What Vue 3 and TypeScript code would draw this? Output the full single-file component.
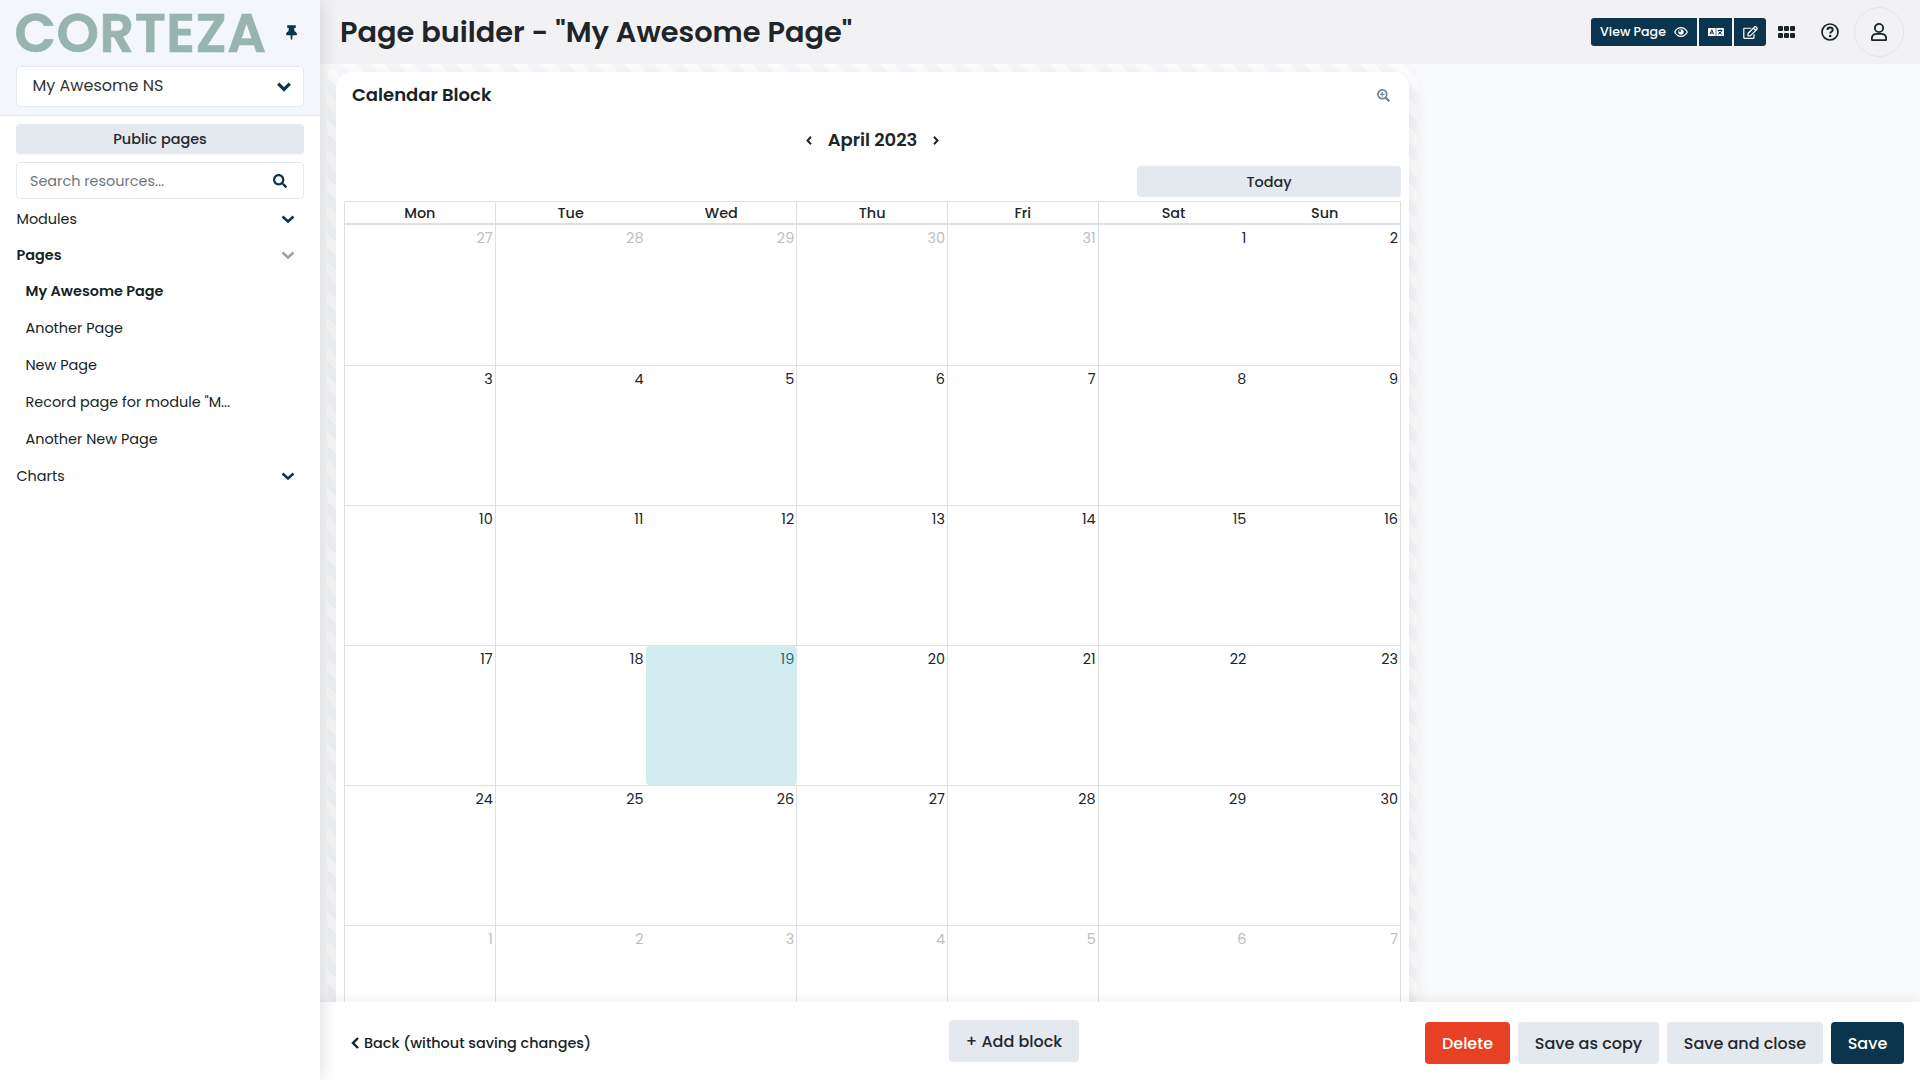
<script setup lang="ts">
interface NavItem { label: string; kind: string; chevron?: string }

const nav: NavItem[] = [
  { label: 'Modules', kind: 'root', chevron: 'dark' },
  { label: 'Pages', kind: 'root bold', chevron: 'grey' },
  { label: 'My Awesome Page', kind: 'child bold' },
  { label: 'Another Page', kind: 'child' },
  { label: 'New Page', kind: 'child' },
  { label: 'Record page for module "M...', kind: 'child' },
  { label: 'Another New Page', kind: 'child' },
  { label: 'Charts', kind: 'root', chevron: 'dark' },
]

const weekdays = ['Mon', 'Tue', 'Wed', 'Thu', 'Fri', 'Sat', 'Sun']

interface Day { n: number; muted: boolean; today: boolean }
const start = new Date(2023, 2, 27)
const weeks: Day[][] = Array.from({ length: 6 }, (_, w) =>
  Array.from({ length: 7 }, (_, d) => {
    const date = new Date(start.getFullYear(), start.getMonth(), start.getDate() + w * 7 + d)
    const april = date.getMonth() === 3
    return { n: date.getDate(), muted: !april, today: april && date.getDate() === 19 }
  }),
)
</script>

<template>
  <div class="app">
    <aside class="sidebar">
      <div class="brand">
        <div class="brand-row">
          <div class="logo">CORTEZA</div>
          <svg class="pin" width="11" height="15" viewBox="0 0 384 512"><path fill="currentColor" d="M298 214 285 96h35c13 0 24-11 24-24V24c0-13-11-24-24-24H64C51 0 40 11 40 24v48c0 13 11 24 24 24h35L86 214C37 237 0 277 0 328c0 13 11 24 24 24h136v104l24 52q8 12 16 0l24-52V352h136c13 0 24-11 24-24 0-52-38-91-86-114z" /></svg>
        </div>
        <div class="select">
          <span>My Awesome NS</span>
          <svg width="14" height="10" viewBox="0 0 14 10"><path d="M1.200 1.700 7 7.500 12.800 1.700" fill="none" stroke="currentColor" stroke-width="3.200" /></svg>
        </div>
      </div>
      <div class="side-body">
        <button class="btn light public">Public pages</button>
        <div class="search">
          <span>Search resources...</span>
          <svg width="14" height="14" viewBox="0 0 512 512"><path fill="currentColor" d="M505 442.700 405.300 343c-4.500-4.500-10.600-7-17-7H372c27.600-35.300 44-79.700 44-128C416 93.100 322.900 0 208 0S0 93.100 0 208s93.100 208 208 208c48.300 0 92.700-16.400 128-44v16.300c0 6.400 2.500 12.500 7 17l99.700 99.700c9.400 9.400 24.600 9.400 33.900 0l28.300-28.300c9.400-9.400 9.400-24.600.1-34zM208 336c-70.700 0-128-57.200-128-128 0-70.700 57.200-128 128-128 70.700 0 128 57.200 128 128 0 70.700-57.200 128-128 128z" /></svg>
        </div>
        <nav>
          <div v-for="item in nav" :key="item.label" class="nav-item" :class="item.kind">
            <span>{{ item.label }}</span>
            <svg v-if="item.chevron" class="chev" :class="item.chevron" width="14" height="10" viewBox="0 0 14 10"><path d="M1.500 2.500 7 7.500 12.500 2.500" fill="none" stroke="currentColor" stroke-width="2.500" /></svg>
          </div>
        </nav>
      </div>
    </aside>

    <main class="main">
      <header class="topbar">
        <h1 class="title">Page builder - "My Awesome Page"</h1>
        <div class="tools">
          <div class="group">
            <button class="navy view">
              <span>View Page</span>
              <svg width="14" height="12" viewBox="0 0 14 12"><path d="M.7 6C3.500.2 10.500.2 13.300 6 10.500 11.800 3.500 11.800.7 6z" fill="none" stroke="#fff" stroke-width="1.200" /><circle cx="7" cy="6" r="2.700" fill="#fff" /><circle cx="6" cy="5" r="1" fill="#0b344e" /></svg>
            </button>
            <button class="navy lang">
              <svg width="16" height="8" viewBox="0 0 16 8"><rect x="8.300" width="7.700" height="8" rx=".6" fill="#fff" /><rect width="7.700" height="8" rx=".6" fill="#fff" /><path d="M2 6.300 3.800 1.800 5.600 6.300M2.700 5h2.200M9.800 2.500h4.600M12.100 1.300v1.200M13.600 2.600C13 4.500 11.500 5.700 10 6.400M10.800 3.700c.8 1.300 1.900 2.100 3.200 2.700" fill="none" stroke="#0b344e" stroke-width="1" /></svg>
            </button>
            <button class="navy edit">
              <svg width="15" height="13" viewBox="0 0 576 512"><path fill="#fff" d="m402.300 344.900 32-32c5-5 13.700-1.500 13.700 5.700V464c0 26.500-21.500 48-48 48H48c-26.500 0-48-21.500-48-48V112c0-26.500 21.500-48 48-48h273.500c7.100 0 10.700 8.600 5.700 13.700l-32 32c-1.500 1.500-3.500 2.300-5.700 2.300H48v352h352V350.500c0-2.100.8-4.100 2.300-5.600zm156.600-201.800L296.300 405.700l-90.400 10c-26.200 2.900-48.500-19.200-45.600-45.600l10-90.400L432.900 17.100c22.900-22.900 59.900-22.900 82.700 0l43.200 43.200c22.900 22.900 22.900 60 .1 82.800zM460.100 174 402 115.900 216.200 301.800l-7.300 65.300 65.300-7.300L460.100 174zm64.800-79.700-43.200-43.200c-4.100-4.100-10.800-4.100-14.800 0L436 82l58.100 58.100 30.900-30.900c4-4.200 4-10.800-.1-14.900z" /></svg>
            </button>
          </div>
          <svg class="apps" width="17" height="12" viewBox="0 0 17 12"><g fill="currentColor"><rect width="5" height="5" rx="1" /><rect x="6" width="5" height="5" rx="1" /><rect x="12" width="5" height="5" rx="1" /><rect y="7" width="5" height="5" rx="1" /><rect x="6" y="7" width="5" height="5" rx="1" /><rect x="12" y="7" width="5" height="5" rx="1" /></g></svg>
          <svg class="help" width="18" height="18" viewBox="0 0 18 18"><circle cx="9" cy="9" r="8" fill="none" stroke="currentColor" stroke-width="1.700" /><path d="M6.400 7C6.500 3.700 11.700 3.800 11.700 6.900 11.700 8.900 9.200 8.700 9.200 10.600" fill="none" stroke="currentColor" stroke-width="1.900" /><circle cx="9.200" cy="13" r="1.300" fill="currentColor" /></svg>
          <div class="avatar">
            <svg width="16" height="18" viewBox="0 0 16 18"><g fill="none" stroke="currentColor" stroke-width="1.800"><circle cx="8" cy="5" r="4.100" /><path d="M4.800 10.800h6.400q4 .5 4 5.300 0 1.100-1.200 1.100H2q-1.200 0-1.200-1.100 0-4.800 4-5.300z" /></g></svg>
          </div>
        </div>
      </header>

      <section class="canvas">
        <div class="stripes">
          <div class="card">
            <div class="card-head">
              <span class="card-title">Calendar Block</span>
              <svg width="13" height="13" viewBox="0 0 13 13"><circle cx="5.300" cy="5.300" r="4.400" fill="none" stroke="currentColor" stroke-width="1.700" /><path d="M5.300 3.100v4.400M3.100 5.300h4.400" stroke="currentColor" stroke-width="1.200" /><path d="m8.500 8.500 3.700 3.700" stroke="currentColor" stroke-width="2.300" /></svg>
            </div>
            <div class="month">
              <svg width="6" height="9" viewBox="0 0 6 9"><path d="M5 .8 1.500 4.500 5 8.200" fill="none" stroke="currentColor" stroke-width="2" /></svg>
              <span>April 2023</span>
              <svg width="6" height="9" viewBox="0 0 6 9"><path d="M1 .8 4.500 4.500 1 8.200" fill="none" stroke="currentColor" stroke-width="2" /></svg>
            </div>
            <div class="today-row"><button class="btn light today-btn">Today</button></div>
            <div class="calendar">
              <div class="week head">
                <div v-for="d in weekdays" :key="d" class="cell">{{ d }}</div>
              </div>
              <div v-for="(week, i) in weeks" :key="i" class="week" :class="{ first: i === 0 }">
                <div v-for="(day, j) in week" :key="j" class="cell" :class="{ muted: day.muted, today: day.today }">{{ day.n }}</div>
              </div>
            </div>
          </div>
        </div>
      </section>

      <footer class="footer">
        <div class="back">
          <svg width="8" height="12" viewBox="0 0 8 12"><path d="M7 1 2 6l5 5" fill="none" stroke="currentColor" stroke-width="2.400" /></svg>
          <span>Back (without saving changes)</span>
        </div>
        <button class="btn light add">+ Add block</button>
        <div class="actions">
          <button class="btn danger">Delete</button>
          <button class="btn light copy">Save as copy</button>
          <button class="btn light close">Save and close</button>
          <button class="btn primary">Save</button>
        </div>
      </footer>
    </main>
  </div>
</template>

<style>
html, body { margin: 0; overflow: hidden; }
</style>

<style scoped>
* { box-sizing: border-box; }
.app {
  display: flex; width: 1920px; height: 1080px; overflow: hidden;
  font-family: Poppins, Inter, "Noto Sans", sans-serif; font-size: 14.4px; color: #162425; background: #f9fafc;
}
button { font: inherit; border: 0; padding: 0; margin: 0; white-space: nowrap; }
svg { display: block; flex: none; }
.btn { border-radius: 4px; font-weight: 500; color: #23272b; }
.light { background: #e4e8ef; }
.sidebar { width: 320px; height: 1080px; background: #fff; flex: none; box-shadow: 2px 0 16px rgba(0, 0, 0, .13); z-index: 2; }
.brand { height: 116px; background: #f3f6fa; border-bottom: 1px solid #e4e8ef; padding: 12px 16px 0; }
.brand-row { display: flex; align-items: flex-start; height: 54px; }
.logo {
  width: 252px; flex: none; margin-left: -1.500px; white-space: nowrap; line-height: 42px;
  font-size: 54px; font-weight: 600; letter-spacing: .55px; color: #97b5ae; -webkit-text-stroke: .7px #97b5ae;
}
.pin { margin: 13px 0 0 19px; color: #0b344e; }
.select {
  display: flex; align-items: center; justify-content: space-between; height: 41px; background: #fff;
  border: 1px solid #e4e8ef; border-radius: 4px; padding: 0 12px 2px 15.500px; font-size: 16px; color: #333;
}
.select svg { color: #0b344e; margin-top: 2px; }
.side-body { padding: 8px 16px 0; }
.public { display: block; width: 288px; height: 30px; font-size: 14.4px; }
.search {
  display: flex; align-items: center; justify-content: space-between; height: 37px; margin-top: 8px;
  border: 1px solid #e4e8ef; border-radius: 4px; padding: 1px 16px 0 13px; color: #6c757d;
}
.search svg { color: #0b344e; }
nav { padding-top: 2px; }
.nav-item { display: flex; align-items: center; justify-content: space-between; height: 37px; padding: 0 9px 0 .5px; white-space: nowrap; }
.nav-item.root { height: 36px; }
.nav-item.child { padding: 0 0 1px 9.500px; }
.nav-item.bold { font-weight: 600; }
.chev.dark { color: #0b344e; }
.chev.grey { color: #9aa1a8; }
.main { width: 1600px; height: 1080px; display: flex; flex-direction: column; }
.topbar { height: 64px; flex: none; background: #f2f2f4; display: flex; align-items: center; justify-content: space-between; padding: 0 16px 0 20px; }
.title { margin: 0; font-size: 28.8px; font-weight: 600; line-height: 40px; color: #212529; white-space: nowrap; }
.tools { display: flex; align-items: center; color: #162425; }
.group { display: flex; gap: 2px; margin-right: 12px; }
.navy { background: #0b344e; color: #fff; height: 28px; display: flex; align-items: center; justify-content: center; }
.view { width: 106px; border-radius: 3px 0 0 3px; gap: 8px; font-size: 12.6px; font-weight: 500; }
.lang { width: 33px; }
.edit { width: 32px; border-radius: 0 3px 3px 0; }
.apps { margin-right: 26px; }
.help { margin-right: 15px; }
.avatar { width: 50px; height: 50px; border: 1px solid #e4e4e8; border-radius: 50%; display: flex; align-items: center; justify-content: center; }
.canvas { height: 938px; overflow: hidden; padding-left: 7px; background: #f9fafc; }
.stripes {
  width: 1090px; height: 938px; padding: 8px 8px 0 9px; border-radius: 12px 12px 0 0;
  background: repeating-linear-gradient(45deg, #fefefe 0 3.8px, #f6f8fb 3.8px 13.8px, #fefefe 13.8px 20px);
}
.card { width: 1073px; height: 980px; border-radius: 15px; background: #fff; padding: 0 8px; box-shadow: 0 8px 24px rgba(0, 0, 0, .11); }
.card-head { height: 46px; display: flex; align-items: center; justify-content: space-between; padding: 0 11px 0 8px; }
.card-title { font-size: 18px; font-weight: 600; line-height: 26px; }
.card-head svg { color: #6d8494; }
.month { display: flex; align-items: center; justify-content: center; height: 44px; gap: 16px; font-size: 18px; font-weight: 600; color: #212529; }
.month span { line-height: 26px; }
.today-row { height: 39px; display: flex; justify-content: flex-end; padding-top: 4px; }
.today-btn { width: 264px; height: 31px; padding-top: 1px; }
.calendar { border: 1px solid #dde1e6; width: 1057px; }
.week { display: flex; height: 140px; border-bottom: 1px solid #dde1e6; }
.week.first { height: 141px; }
.week.head { height: 23px; border-bottom: 2px solid #dde1e6; }
.cell { flex: 0 0 150.740px; padding: 2px 2px 0 0; text-align: right; line-height: 22px; border-right: 1px solid #dde1e6; font-size: 14.4px; color: #212529; }
.cell:nth-child(2), .cell:nth-child(6) { border-right-color: transparent; }
.cell:nth-child(7) { flex: 1 1 0; border-right: 0; }
.head .cell { padding: 0; text-align: center; font-weight: 500; }
.cell.muted { color: #bcbec0; }
.cell.today { background: #d1ebef; color: #1c6b78; border-radius: 4px; border-right-color: #d1ebef; }
.footer { height: 78px; flex: none; background: #fff; display: flex; align-items: center; padding: 4px 16px 0 31px; box-shadow: 0 -3px 12px rgba(0, 0, 0, .06); z-index: 1; }
.back { display: flex; align-items: center; gap: 5px; width: 598px; font-weight: 500; }
.add { width: 130px; height: 42px; font-size: 16px; margin-top: -4px; padding-top: 1px; }
.actions { display: flex; gap: 8px; margin-left: auto; }
.actions .btn { height: 42px; font-size: 16px; }
.actions .danger { width: 85px; background: #e84024; color: #fff; }
.actions .copy { width: 141px; }
.actions .close { width: 156px; }
.actions .primary { width: 73px; background: #0b344e; color: #fff; }
</style>
